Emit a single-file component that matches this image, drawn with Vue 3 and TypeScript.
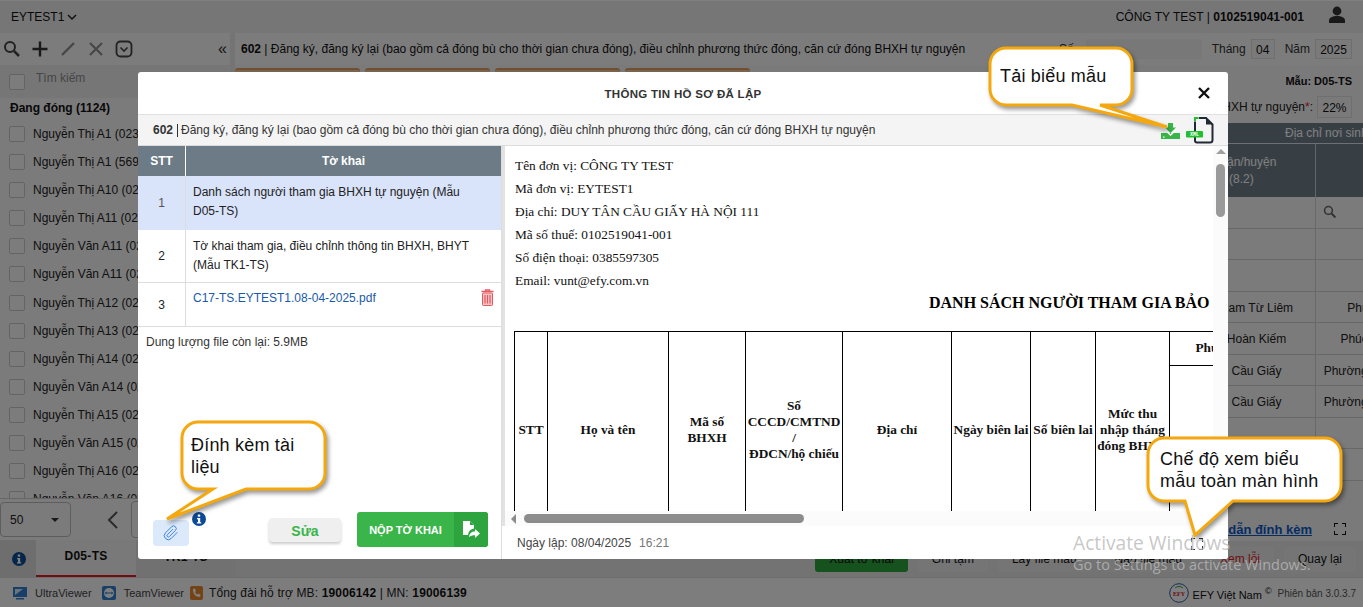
<script setup lang="ts">
const people: string[] = [
  'Nguyễn Thị A1 (0234567)', 'Nguyễn Thị A1 (5691234)', 'Nguyễn Thị A10 (0212345)', 'Nguyễn Thị A11 (0212345)',
  'Nguyễn Văn A11 (0212345)', 'Nguyễn Văn A11 (0212345)', 'Nguyễn Thị A12 (0212345)', 'Nguyễn Thị A13 (0212345)',
  'Nguyễn Thị A14 (0212345)', 'Nguyễn Văn A14 (0212345)', 'Nguyễn Thị A15 (0212345)', 'Nguyễn Văn A15 (0212345)',
  'Nguyễn Thị A16 (0212345)', 'Nguyễn Văn A16 (0212345)'
]
const bgRows: { a: string; b: string }[] = [
  { a: '', b: '' }, { a: '', b: '' },
  { a: 'Nam Từ Liêm', b: 'Phúc Diễn' }, { a: 'Hoàn Kiếm', b: 'Phúc Tân Xá' },
  { a: 'Cầu Giấy', b: 'Phường Dịch Vọng' }, { a: 'Cầu Giấy', b: 'Phường Dịch Vọng' },
  { a: '', b: '' }, { a: '', b: '' }
]
const cards: number[] = [1, 2, 3, 4]
const infoLines: string[] = [
  'Tên đơn vị: CÔNG TY TEST', 'Mã đơn vị: EYTEST1', 'Địa chỉ: DUY TÂN CẦU GIẤY HÀ NỘI 111',
  'Mã số thuế: 0102519041-001', 'Số điện thoại: 0385597305', 'Email: vunt@efy.com.vn'
]
const colWidths: number[] = [33, 121, 77, 97, 109, 79, 65, 74, 126]
</script>

<template>
  <div class="page">
    <header class="topbar">
      <div class="unit">EYTEST1
        <svg width="10" height="7" viewBox="0 0 10 7"><path d="M1 1l4 4 4-4" fill="none" stroke="#222" stroke-width="1.5" /></svg>
      </div>
      <div class="company">CÔNG TY TEST | <b>0102519041-001</b></div>
      <svg class="user" width="18" height="18" viewBox="0 0 18 18"><circle cx="9" cy="5" r="4.4" fill="#333" /><path d="M1 17v-2.500c0-3 3.500-4.500 8-4.500s8 1.500 8 4.500V17z" fill="#333" /></svg>
    </header>

    <div class="main">
      <aside class="side">
        <div class="tools">
          <svg width="18" height="18" viewBox="0 0 18 18"><circle cx="7" cy="7" r="5" fill="none" stroke="#444" stroke-width="2" /><path d="M11 11l5 5" stroke="#444" stroke-width="2.500" /></svg>
          <svg width="18" height="18" viewBox="0 0 18 18"><path d="M9 1.500v15M1.500 9h15" stroke="#333" stroke-width="2.400" /></svg>
          <svg width="18" height="18" viewBox="0 0 18 18"><path d="M3 15L15 3" stroke="#8e8e8e" stroke-width="2.400" /></svg>
          <svg width="18" height="18" viewBox="0 0 18 18"><path d="M3 3l12 12M15 3L3 15" stroke="#8e8e8e" stroke-width="2.200" /></svg>
          <svg width="18" height="18" viewBox="0 0 18 18"><rect x="1.500" y="1.500" width="15" height="15" rx="4" fill="none" stroke="#444" stroke-width="1.800" /><path d="M5.500 7.500L9 11l3.500-3.500" fill="none" stroke="#444" stroke-width="1.600" /></svg>
          <span class="collapse">«</span>
        </div>
        <div class="search-row"><span class="check"></span><span class="ph">Tìm kiếm</span></div>
        <div class="list">
          <div class="group">Đang đóng (1124)</div>
          <div v-for="(p, i) in people" :key="i" class="person"><span class="check"></span><span>{{ p }}</span></div>
        </div>
        <div class="pager">
          <div class="size">50<i class="caret"></i></div>
          <svg class="prev" width="12" height="18" viewBox="0 0 12 18"><path d="M10 1L2 9l8 8" fill="none" stroke="#555" stroke-width="2" /></svg>
          <div class="pagebox"></div>
        </div>
        <div class="tabs">
          <svg class="tab-info" width="14" height="14" viewBox="0 0 14 14"><circle cx="7" cy="7" r="7" fill="#0d4a96" /><rect x="5.800" y="2.500" width="2.400" height="2.200" fill="#fff" /><path d="M5 6h3.200v4.200H9.200v1.300H4.900v-1.300H6V7.300H5z" fill="#fff" /></svg>
          <div class="tab active">D05-TS</div>
          <div class="tab">TK1-TS</div>
        </div>
      </aside>

      <section class="content">
        <div class="titlebar">
          <div class="t-text"><b>602</b> | Đăng ký, đăng ký lại (bao gồm cả đóng bù cho thời gian chưa đóng), điều chỉnh phương thức đóng, căn cứ đóng BHXH tự nguyện</div>
          <span class="lbl so">Số</span><span class="box wide"></span>
          <span class="lbl">Tháng</span><span class="box month">04</span>
          <span class="lbl">Năm</span><span class="box year">2025</span>
        </div>
        <div class="cards"><div v-for="c in cards" :key="c" class="card"></div></div>
        <div class="form-r"><b>Mẫu: D05-TS</b></div>
        <div class="form-r rate"><span>Mức đóng BHXH tự nguyện<em>*</em>:</span><span class="box pct">22%</span></div>
        <div class="sheet">
          <div class="sh-top">Địa chỉ nơi sinh</div>
          <div class="sh-row sh-head"><div class="c1">Quận/huyện<br /><span class="h2">(8.2)</span></div><div class="c2"></div></div>
          <div class="sh-row sh-filter"><div class="c1"></div><div class="c2 mag">
            <svg width="14" height="14" viewBox="0 0 18 18"><circle cx="7" cy="7" r="5" fill="none" stroke="#666" stroke-width="2" /><path d="M11 11l5 5" stroke="#666" stroke-width="2.500" /></svg>
          </div></div>
          <div v-for="(r, i) in bgRows" :key="i" class="sh-row"><div class="c1">{{ r.a }}</div><div class="c2">{{ r.b }}</div></div>
        </div>
        <div class="guide">
          <a>Hướng dẫn đính kèm</a>
          <svg width="12" height="12" viewBox="0 0 12 12"><path d="M0 4V0h4M8 0h4v4M12 8v4H8M4 12H0V8" fill="none" stroke="#111" stroke-width="2" /></svg>
        </div>
        <div class="actions">
          <span class="btn green">Xuất tờ khai</span><span class="btn">Ghi tạm</span><span class="btn">Lấy file mẫu</span><span class="btn">Nạp file mẫu</span><span class="btn err">Xem lỗi</span><span class="btn">Quay lại</span>
        </div>
      </section>
    </div>

    <footer class="foot">
      <svg width="14" height="14" viewBox="0 0 14 14"><rect x="0" y="1" width="14" height="10" fill="#2f7fd0" /><path d="M2 9l8-6H2z" fill="#d8e8f8" /><rect x="3" y="12" width="8" height="1.500" fill="#2f7fd0" /></svg>
      <span class="f-a">UltraViewer</span>
      <svg width="14" height="14" viewBox="0 0 14 14"><rect width="14" height="14" rx="2" fill="#2f7fd0" /><circle cx="7" cy="7" r="5" fill="#fff" /><path d="M2.500 7l2-1.500V6.500h5V5.500l2 1.500-2 1.500V7.500h-5v1z" fill="#2f7fd0" /></svg>
      <span class="f-b">TeamViewer</span>
      <svg width="13" height="14" viewBox="0 0 13 14"><rect width="13" height="14" rx="2" fill="#e8872a" /><path d="M3 3l2-.500 1 2.500-1 1c.500 1.200 1.300 2 2.500 2.500l1-1 2 1.200-.500 2C6 11.500 2.500 7.500 3 3z" fill="#fff" /></svg>
      <span class="f-c">Tổng đài hỗ trợ MB: <b>19006142</b> | MN: <b>19006139</b></span>
      <svg class="efy" width="20" height="20" viewBox="0 0 20 20"><circle cx="10" cy="10" r="9.300" fill="#fff" stroke="#2a5ca8" stroke-width="1" /><text x="10" y="12.500" text-anchor="middle" class="efy-t">EFY</text><path d="M6 5c2.500-2 5.500-2 8 0" fill="none" stroke="#3aa655" stroke-width="1" /></svg>
      <span class="f-d">EFY Việt Nam <sup>©</sup></span>
      <span class="f-e">Phiên bản 3.0.3.7</span>
    </footer>

    <div class="overlay"></div>

    <div class="modal">
      <div class="m-head">
        <span class="m-title">THÔNG TIN HỒ SƠ ĐÃ LẬP</span>
        <svg class="m-close" width="12" height="12" viewBox="0 0 12 12"><path d="M1 1l10 10M11 1L1 11" stroke="#111" stroke-width="2.400" /></svg>
      </div>
      <div class="m-sub">
        <b>602</b><i class="bar"></i><span>Đăng ký, đăng ký lại (bao gồm cả đóng bù cho thời gian chưa đóng), điều chỉnh phương thức đóng, căn cứ đóng BHXH tự nguyện</span>
        <svg class="dl" width="19" height="16" viewBox="0 0 19 16"><rect x="0" y="10" width="19" height="6" fill="#39b54a" /><path d="M4.500 7.500L9.500 12l5-4.500" fill="none" stroke="#fff" stroke-width="1.500" /><path d="M7 0h5v4.500h3L9.500 10 4 4.500h3z" fill="#39b54a" /><rect x="2" y="13.500" width="1.500" height="1.200" fill="#fff" /></svg>
        <svg class="xml" width="28" height="27" viewBox="0 0 28 27">
          <path d="M9 4.500V23.500a2 2 0 0 0 2 2H24a2.500 2.500 0 0 0 2.500-2.500V7.500L20 1H13" fill="none" stroke="#222a35" stroke-width="2" />
          <path d="M20 1v6.500h6.500z" fill="#222a35" />
          <path d="M9 4V1h3.500" fill="none" stroke="#1fc12f" stroke-width="2" />
          <rect x="0" y="14" width="17" height="6.500" rx="1" fill="#1fc12f" />
          <text x="8.500" y="19.300" text-anchor="middle" class="xml-t">XML</text>
        </svg>
      </div>
      <div class="m-body">
        <div class="left">
          <div class="lt-head"><div class="lt-n">STT</div><div class="lt-t">Tờ khai</div></div>
          <div class="lt-row sel r1"><div class="lt-n">1</div><div class="lt-c">Danh sách người tham gia BHXH tự nguyện (Mẫu D05-TS)</div></div>
          <div class="lt-row r1"><div class="lt-n">2</div><div class="lt-c">Tờ khai tham gia, điều chỉnh thông tin BHXH, BHYT (Mẫu TK1-TS)</div></div>
          <div class="lt-row r3"><div class="lt-n">3</div><div class="lt-c file"><a>C17-TS.EYTEST1.08-04-2025.pdf</a>
            <svg width="13" height="17" viewBox="0 0 13 17"><path d="M4.500 2V.8h4V2M.5 2.500h12" fill="none" stroke="#e2585e" stroke-width="1.300" /><rect x="1.500" y="4" width="10" height="12.500" rx="1" fill="#f6c4c6" stroke="#e2585e" stroke-width="1" /><path d="M4 6v8.500M6.500 6v8.500M9 6v8.500" stroke="#e2585e" stroke-width="1.200" /></svg>
          </div></div>
          <div class="quota">Dung lượng file còn lại: 5.9MB</div>
          <div class="l-foot">
            <span class="clip">
              <svg width="16" height="16" viewBox="0 0 24 24"><path d="M21.440 11.050l-9.190 9.190a6 6 0 0 1-8.490-8.490l9.190-9.190a4 4 0 0 1 5.660 5.660l-9.200 9.190a2 2 0 0 1-2.830-2.830l8.490-8.480" fill="none" stroke="#3b82e6" stroke-width="1.500" /></svg>
            </span>
            <svg class="i-info" width="14" height="14" viewBox="0 0 14 14"><circle cx="7" cy="7" r="7" fill="#0d4a96" /><rect x="5.800" y="2.500" width="2.400" height="2.200" fill="#fff" /><path d="M5 6h3.200v4.200H9.200v1.300H4.900v-1.300H6V7.300H5z" fill="#fff" /></svg>
            <span class="sua">Sửa</span>
            <span class="nop"><span class="nop-t">NỘP TỜ KHAI</span><span class="nop-i">
              <svg width="18" height="18" viewBox="0 0 18 18"><path d="M1 0h7l4 4v3.500C8.500 8 6.500 10 6 14H1z" fill="#fff" /><path d="M8 0v4h4" fill="#2da43d" /><path d="M7 16c.3-3.500 2.500-5.500 6-5.500V8l5 4.500-5 4.500v-2.800c-2.500 0-4.500.5-6 1.800z" fill="#fff" /></svg>
            </span></span>
          </div>
        </div>
        <div class="right">
          <div class="viewer">
            <div class="doc">
              <p v-for="(l, i) in infoLines" :key="i" class="info">{{ l }}</p>
              <div class="doc-title">DANH SÁCH NGƯỜI THAM GIA BẢO HIỂM XÃ HỘI TỰ NGUYỆN</div>
              <table class="dt">
                <colgroup><col v-for="(w, i) in colWidths" :key="i" :style="{ width: w + 'px' }" /></colgroup>
                <tbody>
                  <tr class="tr1">
                    <th rowspan="2">STT</th><th rowspan="2">Họ và tên</th><th rowspan="2">Mã số<br />BHXH</th>
                    <th rowspan="2">Số<br />CCCD/CMTND<br />/<br />ĐDCN/hộ chiếu</th><th rowspan="2">Địa chỉ</th><th rowspan="2">Ngày biên lai</th>
                    <th rowspan="2">Số biên lai</th><th rowspan="2">Mức thu<br />nhập tháng<br />đóng BHXH</th><th>Phương thức</th>
                  </tr>
                  <tr class="tr2"><th>Số thẻ BHYT</th></tr>
                </tbody>
              </table>
            </div>
          </div>
          <div class="vbar"><i class="up"></i><i class="vthumb"></i></div>
          <div class="hbar"><i class="lf"></i><i class="hthumb"></i></div>
          <div class="r-foot">
            <span>Ngày lập: 08/04/2025</span><span class="time">16:21</span>
            <svg width="12" height="12" viewBox="0 0 12 12"><path d="M0 4V0h4M8 0h4v4M12 8v4H8M4 12H0V8" fill="none" stroke="#333" stroke-width="2" /></svg>
          </div>
        </div>
      </div>
    </div>

    <svg class="bubbles" width="1363" height="607" viewBox="0 0 1363 607">
      <path d="M1006 48H1116a16 16 0 0 1 16 16V89a16 16 0 0 1-16 16H1100L1167 127L1072 105H1006a16 16 0 0 1-16-16V64a16 16 0 0 1 16-16Z" />
      <path d="M199 422H309a16 16 0 0 1 16 16V473a16 16 0 0 1-16 16H246L167 519L213 489H199a16 16 0 0 1-17-16V438a16 16 0 0 1 17-16Z" />
      <path d="M1164 438H1325a16 16 0 0 1 16 16V485a16 16 0 0 1-16 16H1233L1195 535L1185 501H1164a16 16 0 0 1-16-16V454a16 16 0 0 1 16-16Z" />
    </svg>
    <div class="say s1">Tải biểu mẫu</div>
    <div class="say s2">Đính kèm tài<br />liệu</div>
    <div class="say s3">Chế độ xem biểu<br />mẫu toàn màn hình</div>

    <div class="wm w1">Activate Windows</div>
    <div class="wm w2">Go to Settings to activate Windows.</div>
  </div>
</template>

<style>
html, body { margin: 0; background: #fff; }
</style>

<style scoped>
.page {
  position: relative; width: 1363px; height: 607px; overflow: hidden;
  display: flex; flex-direction: column;
  font-family: "Liberation Sans", Arial, sans-serif; font-size: 12px; color: #222; background: #e9e9e9;
}
.topbar { flex: 0 0 33px; display: flex; align-items: center; background: #ededed; padding: 0 17px 0 11px; box-sizing: border-box; border-top: 1px solid #fff; }
.unit { display: flex; align-items: center; gap: 3px; color: #111; }
.company { margin-left: auto; margin-right: 24px; color: #111; }
.user { margin-top: -4px; }
.main { flex: 1; display: flex; min-height: 0; }
.side { flex: 0 0 230px; min-width: 0; display: flex; flex-direction: column; background: #f6f6f6; min-height: 0; }
.tools { flex: 0 0 32px; display: flex; align-items: center; gap: 10px; padding-left: 3px; background: #f8f8f8; }
.collapse { margin-left: auto; margin-right: 3px; font-size: 16px; color: #333; }
.search-row { flex: 0 0 33px; display: flex; align-items: center; gap: 8px; padding-left: 9px; background: #ececec; box-sizing: border-box; }
.ph { color: #8c8c8c; margin: -7px 0 0 3px; }
.check { flex: none; width: 14px; height: 14px; border: 1px solid #c8c8c8; background: #f8f8f8; border-radius: 2px; }
.list { flex: 1; overflow: hidden; min-height: 0; }
.group { font-weight: bold; padding: 3px 0 0 10px; height: 19px; color: #111; }
.person { display: flex; align-items: center; gap: 8px; height: 28.080px; padding-left: 9px; white-space: nowrap; }
.pager { flex: 0 0 42px; display: flex; align-items: center; border-top: 1px solid #ccc; box-sizing: border-box; }
.size { flex: none; width: 71px; height: 35px; box-sizing: border-box; border: 1px solid #bbb; border-radius: 4px; display: flex; align-items: center; justify-content: space-between; padding: 0 11px 0 9px; color: #222; }
.caret { border: 4px solid transparent; border-top: 4px solid #333; border-bottom: 0; }
.prev { margin-left: 36px; }
.pagebox { width: 60px; height: 35px; margin-left: 12px; border: 1px solid #bbb; border-radius: 4px; }
.tabs { flex: 0 0 37px; display: flex; align-items: stretch; background: #dcdcdc; box-sizing: border-box; position: relative; }
.tab-info { flex: none; align-self: center; margin: 0 10px 0 12px; }
.tab { flex: none; width: 100px; display: flex; align-items: center; justify-content: center; font-weight: bold; color: #111; letter-spacing: .3px; padding-bottom: 4px; box-sizing: border-box; background: #e2e2e2; }
.tab.active { background: #f2f2f2; border-bottom: 2px solid #e01b24; }
.content { flex: 1; min-width: 0; margin-left: 5px; display: flex; flex-direction: column; background: #f5f5f5; overflow: hidden; }
.titlebar { flex: 0 0 32px; display: flex; align-items: center; background: #f8f8f8; padding: 0 11px 0 6px; box-sizing: border-box; white-space: nowrap; }
.t-text { flex: 1; min-width: 0; color: #111; }
.lbl { color: #333; margin: 0 5px 0 10px; }
.so { margin: 0 12px 0 0; }
.box { display: inline-block; height: 20px; line-height: 20px; box-sizing: border-box; background: #f4f4f4; border: 1px solid #dedede; text-align: center; color: #111; }
.wide { width: 116px; border: 0; background: #f0f0f0; }
.month { width: 24px; }
.year { width: 37px; }
.cards { flex: 0 0 4px; display: flex; gap: 5px; margin-top: 3px; }
.card { width: 125px; background: #f3c99c; border-top: 2px solid #e0a060; border-radius: 3px 3px 0 0; }
.form-r { flex: 0 0 18px; display: flex; align-items: center; justify-content: flex-end; padding: 0 11px; box-sizing: border-box; }
.form-r b { font-size: 11px; color: #111; }
.rate { flex: 0 0 33px; gap: 4px; }
.rate em { color: #e01b24; font-style: normal; }
.pct { width: 35px; height: 22px; line-height: 22px; }
.sheet { flex: none; height: 388px; overflow: hidden; }
.sh-top { height: 21px; background: #6f7f8b; color: #fff; line-height: 21px; padding-left: 1050px; box-sizing: border-box; border-bottom: 1px solid #dde; white-space: nowrap; }
.sh-row { display: flex; height: 31.500px; box-sizing: border-box; border-bottom: 1px solid #d0d0d0; white-space: nowrap; background: #f7f7f7; }
.c1 { flex: 0 0 1081px; box-sizing: border-box; text-align: center; padding-left: 963px; line-height: 32px; border-right: 1px solid #d0d0d0; }
.c2 { flex: 0 0 118px; text-align: center; line-height: 32px; white-space: nowrap; }
.sh-head { height: 53px; background: #6f7f8b; color: #fff; border-bottom: 0; }
.sh-head .c1 { text-align: left; padding: 10px 0 0 976px; line-height: 17px; border-color: #ccc; }
.h2 { padding-left: 18px; }
.mag { display: flex; align-items: center; justify-content: flex-start; padding-left: 7px; box-sizing: border-box; }
.guide { flex: none; display: flex; justify-content: flex-end; align-items: center; gap: 22px; padding: 6px 17px 0 0; height: 30px; box-sizing: border-box; font-weight: bold; font-size: 13px; }
.guide a { color: #0a5ac8; text-decoration: underline; }
.actions { flex: 1; display: flex; justify-content: flex-end; gap: 10px; padding: 6px 7px 0 0; background: #e6e6e6; }
.btn { height: 25px; line-height: 25px; padding: 0 14px; background: #ebebeb; border-radius: 3px; color: #111; }
.btn.green { background: #2da43d; color: #111; }
.btn.err { color: #e01b24; }
.foot { flex: 0 0 30px; display: flex; align-items: center; background: #fafafa; padding: 1px 7px 0 13px; box-sizing: border-box; border-top: 1px solid #ddd; color: #333; white-space: nowrap; }
.f-a { margin: 0 10px 0 8px; color: #444; font-size: 11px; }
.f-b { margin: 0 6px 0 8px; color: #444; font-size: 11px; }
.f-c { margin-left: 6px; color: #222; letter-spacing: .14px; }
.f-c b { color: #111; }
.efy { margin-left: auto; }
.efy-t { font-size: 6px; font-weight: bold; fill: #d02020; font-family: "Liberation Serif", serif; }
.f-d { margin: 0 6px 0 4px; color: #111; font-size: 11px; }
.f-d sup { font-size: 9px; }
.f-e { color: #555; font-size: 10px; }
.overlay { position: absolute; inset: 0; background: rgba(0, 0, 0, .5); }

.modal { position: absolute; left: 138px; top: 72px; width: 1090px; height: 487px; background: #fff; border-radius: 3px; display: flex; flex-direction: column; overflow: hidden; }
.m-head { flex: 0 0 42px; display: flex; align-items: center; justify-content: center; position: relative; }
.m-title { font-weight: bold; color: #333; font-size: 11.500px; letter-spacing: .3px; padding-top: 2px; }
.m-close { position: absolute; left: 1060px; top: 15px; }
.m-sub { flex: 0 0 32px; display: flex; align-items: center; box-sizing: border-box; background: #f4f4f4; border-top: 1px solid #e0e0e0; border-bottom: 1px solid #dcdcdc; padding-left: 15px; white-space: nowrap; color: #333; }
.m-sub b { color: #333; }
.bar { width: 1px; height: 13px; background: #333; margin: 0 3px 0 4px; }
.dl { margin-left: auto; margin-top: 2px; }
.xml { margin: 0 14px 0 6px; }
.xml-t { font-size: 5px; font-weight: bold; fill: #fff; font-family: "Liberation Mono", monospace; }
.m-body { flex: 1; display: flex; min-height: 0; }
.left { flex: 0 0 364px; display: flex; flex-direction: column; border-right: 1px solid #ddd; box-sizing: border-box; }
.lt-head { flex: 0 0 30px; display: flex; background: #6c7b85; color: #fff; font-weight: bold; }
.lt-head .lt-n { border-color: #fff; }
.lt-n { flex: 0 0 48px; box-sizing: border-box; display: flex; align-items: center; justify-content: center; border-right: 1px solid #ddd; color: inherit; }
.lt-t { flex: 1; display: flex; align-items: center; justify-content: center; }
.lt-row { display: flex; border-bottom: 1px solid #ddd; box-sizing: border-box; color: #222; }
.r1 { flex: 0 0 53px; }
.r3 { flex: 0 0 44px; }
.sel { background: #d9e3fa; border-color: #d9e3fa; flex-basis: 54px; }
.sel .lt-n { color: #555; }
.lt-c { flex: 1; padding: 7px 30px 0 7px; line-height: 19px; box-sizing: border-box; }
.file { display: flex; justify-content: space-between; padding: 6px 7px 0 7px; }
.file a { color: #1a5aa8; }
.quota { padding: 8px 0 0 8px; color: #333; }
.l-foot { margin-top: auto; display: flex; align-items: flex-start; height: 47px; padding-left: 15px; }
.clip { width: 36px; height: 26px; margin-top: 8px; background: #dbe9fb; border-radius: 4px; display: flex; align-items: center; justify-content: center; }
.i-info { margin: 0 0 0 3px; }
.sua { width: 72px; height: 24px; margin: 6px 0 0 63px; border-radius: 4px; background: #efefef; box-shadow: 0 2px 3px rgba(0, 0, 0, .2); color: #39b54a; font-weight: bold; font-size: 14px; line-height: 26px; text-align: center; }
.nop { display: flex; height: 35px; width: 131px; margin-left: 16px; background: #39b54a; border-radius: 3px; overflow: hidden; color: #fff; font-weight: bold; font-size: 11px; }
.nop-t { flex: 1; display: flex; align-items: center; justify-content: center; }
.nop-i { flex: 0 0 34px; background: #2da43d; display: flex; align-items: center; justify-content: center; }
.right { flex: 1; min-width: 0; display: grid; grid-template-columns: 1fr 15px; grid-template-rows: 1fr 15px 33px; border-left: 3px solid #e2e2e2; min-height: 0; }
.viewer { overflow: hidden; min-width: 0; min-height: 0; }
.doc { width: 1000px; padding: 8px 0 0 9px; font-family: "Liberation Serif", serif; font-size: 13.330px; color: #111; }
.info { margin: 0 0 0 1px; height: 23.100px; line-height: 23px; white-space: nowrap; }
.doc-title { font-weight: bold; font-size: 16px; white-space: nowrap; margin: -1px 0 0 415px; height: 39px; line-height: 22px; color: #000; }
.dt { border-collapse: collapse; table-layout: fixed; width: 781px; height: 198px; color: #111; }
.dt th { border: 1px solid #000; padding: 0 1px; font-size: 13.330px; line-height: 16px; text-align: center; vertical-align: middle; white-space: nowrap; }
.tr1 { height: 34px; }
.vbar { grid-column: 2; grid-row: 1 / 3; background: #fbfbfb; position: relative; }
.up { position: absolute; left: 3px; top: 3px; border: 5px solid transparent; border-top: 0; border-bottom: 5px solid #a0a0a0; }
.vthumb { position: absolute; left: 3px; top: 18px; width: 9px; height: 53px; background: #9a9a9a; border-radius: 5px; }
.hbar { grid-column: 1; grid-row: 2; background: #fbfbfb; position: relative; }
.lf { position: absolute; left: 6px; top: 3px; border: 5px solid transparent; border-left: 0; border-right: 5px solid #8c8c8c; }
.hthumb { position: absolute; left: 19px; top: 3px; width: 280px; height: 9px; background: #8c8c8c; border-radius: 5px; }
.r-foot { grid-column: 1 / 3; grid-row: 3; display: flex; align-items: center; padding: 0 25px 0 15px; background: #fff; color: #444; margin-left: -3px; }
.time { margin-left: 8px; color: #777; }
.r-foot svg { margin-left: auto; margin-top: 2px; }

.bubbles { position: absolute; left: 0; top: 0; pointer-events: none; filter: drop-shadow(2px 3px 2px rgba(0, 0, 0, .4)); }
.bubbles path { fill: #fff; stroke: #f5a80e; stroke-width: 3; stroke-linejoin: miter; }
.say { position: absolute; font-size: 18px; line-height: 22px; letter-spacing: .2px; color: #111; white-space: nowrap; }
.s1 { left: 1000px; top: 65px; }
.s2 { left: 191px; top: 434px; }
.s3 { left: 1160px; top: 448px; }
.wm { position: absolute; left: 1073px; color: rgba(185, 185, 185, .8); font-family: "Open Sans", sans-serif; white-space: nowrap; pointer-events: none; }
.w1 { top: 529px; font-size: 19.200px; }
.w2 { top: 555px; font-size: 14.500px; }
</style>
